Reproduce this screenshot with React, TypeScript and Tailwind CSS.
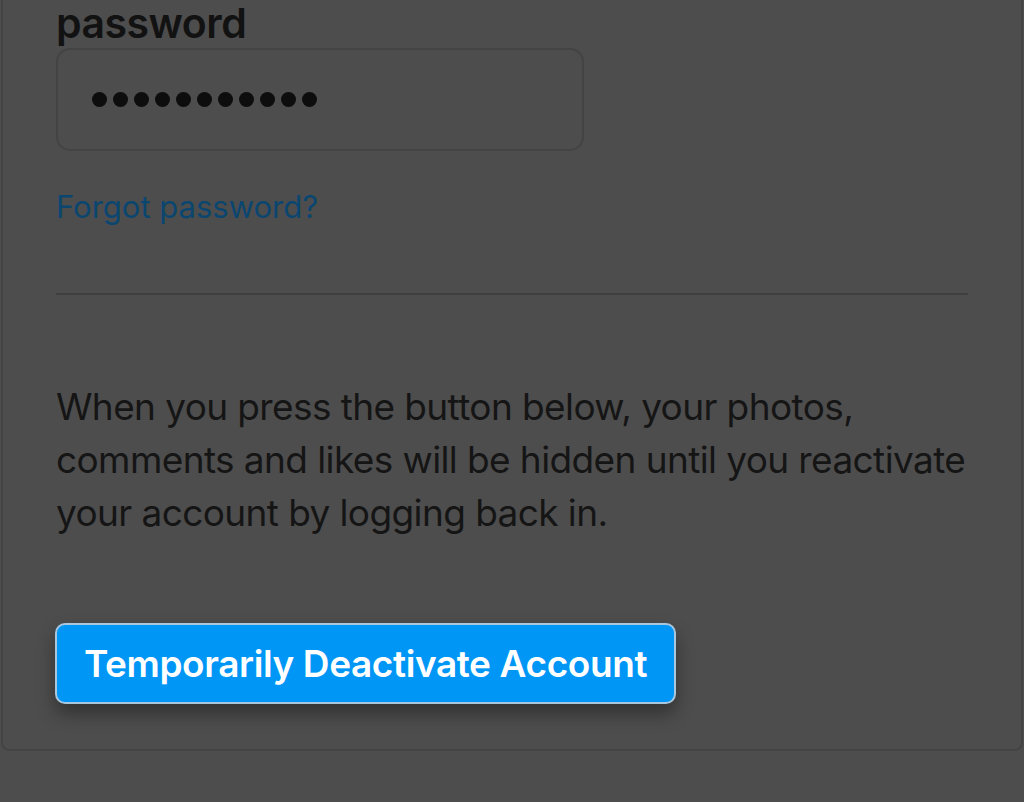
export default function App() {
  return (
    <div
      className="w-[1024px] h-[802px] overflow-hidden bg-[#4d4d4d]"
      style={{ fontFamily: 'Inter, "Noto Sans", sans-serif' }}
    >
      <div className="mx-[1px] h-[751px] border-x-2 border-b-2 border-[#444444] rounded-b-[8px] px-[53px] flex flex-col">
        <label className="shrink-0 pt-[1px] text-[41px] leading-[44px] font-semibold text-[#121212] tracking-[-0.5px]">
          password
        </label>
        <div className="shrink-0 mt-[3px] w-[528px] h-[103px] rounded-[14px] border-2 border-[#444444] flex items-center pl-[34px] gap-[6px]">
          {Array.from({ length: 11 }).map((_, i) => (
            <span key={i} className="w-[15px] h-[15px] rounded-full bg-[#0d0d0d]" />
          ))}
        </div>
        <a className="shrink-0 mt-[35px] text-[31px] leading-[42px] text-[#0a4670]">Forgot password?</a>
        <div className="shrink-0 mt-[65px] h-[2px] bg-[#3f3f3f]" />
        <p className="shrink-0 mt-[85px] whitespace-nowrap text-[37px] leading-[53px] text-[#151515] tracking-[-0.6px]">
          When you press the button below, your photos,
          <br />
          comments and likes will be hidden until you reactivate
          <br />
          your account by logging back in.
        </p>
        <div className="shrink-0 mt-[84px] ml-[-1px]">
          <button className="w-[621px] h-[81px] rounded-[10px] bg-[#0096f6] border-2 border-[#a8c6de] text-white text-[37px] font-semibold shadow-[0_10px_18px_rgba(0,0,0,0.35)] tracking-[-0.4px]">
            Temporarily Deactivate Account
          </button>
        </div>
      </div>
    </div>
  );
}
